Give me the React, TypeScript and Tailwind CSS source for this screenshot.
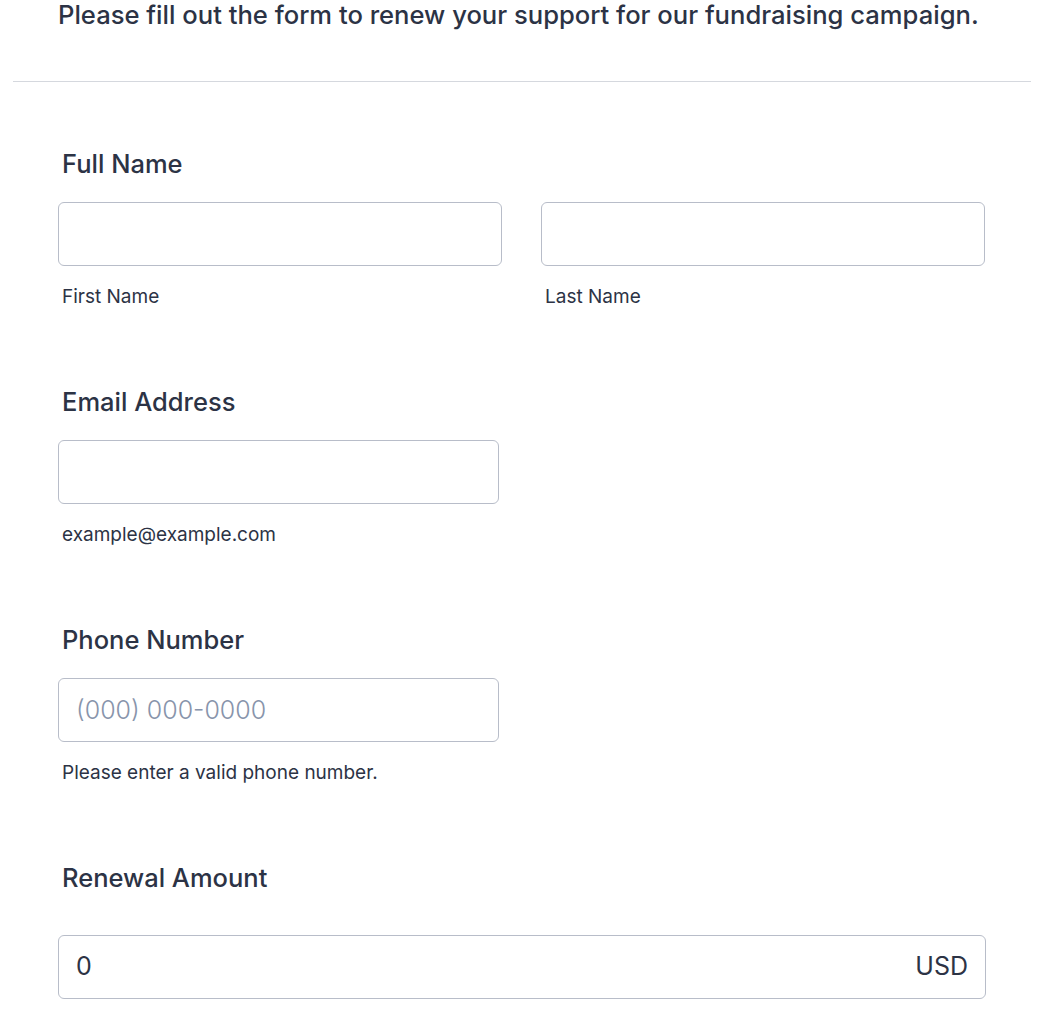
export default function App() {
  const label = "block text-[25.5px] leading-[32px] font-medium text-[#2c3345] pl-[4px]";
  const input =
    "block h-[64px] w-full rounded-[6px] border-[1.5px] border-[#b8bdc9] bg-white px-[17px] text-[25px] text-[#2c3345] outline-none placeholder:text-[#8894ab] placeholder:font-light";
  const sub = "block text-[19px] leading-[24px] text-[#2c3345] pl-[4px] mt-[19px]";

  return (
    <div className="min-h-screen bg-white font-['Inter','Noto_Sans',sans-serif] text-[#2c3345]">
      <div className="px-[13px]">
        <div className="pl-[45px] h-[82px]">
          <p className="text-[25.6px] leading-[32px] font-medium -mt-[1px]">
            Please fill out the form to renew your support for our fundraising campaign.
          </p>
        </div>
        <div className="border-t-[1.5px] border-[#d5d8de]" />
      </div>

      <div className="px-[58px] pt-[66px]">
        {/* Full Name */}
        <div>
          <label className={label}>Full Name</label>
          <div className="mt-[22px] grid grid-cols-2 gap-x-[39px] w-[927px]">
            <div>
              <input className={input} />
              <span className={sub}>First Name</span>
            </div>
            <div>
              <input className={input} />
              <span className={sub}>Last Name</span>
            </div>
          </div>
        </div>

        {/* Email */}
        <div className="mt-[77px]">
          <label className={label}>Email Address</label>
          <div className="mt-[22px] w-[441px]">
            <input className={input} type="email" />
            <span className={sub}>example@example.com</span>
          </div>
        </div>

        {/* Phone */}
        <div className="mt-[77px]">
          <label className={label}>Phone Number</label>
          <div className="mt-[22px] w-[441px]">
            <input className={input} placeholder="(000) 000-0000" />
            <span className={sub}>Please enter a valid phone number.</span>
          </div>
        </div>

        {/* Renewal Amount */}
        <div className="mt-[77px]">
          <label className={label}>Renewal Amount</label>
          <div className="mt-[41px] w-[928px] flex items-center h-[64px] rounded-[6px] border-[1.5px] border-[#b8bdc9] px-[17px]">
            <input className="flex-1 min-w-0 bg-transparent text-[25px] text-[#2c3345] outline-none" defaultValue="0" />
            <span className="text-[25px] text-[#2c3345]">USD</span>
          </div>
        </div>
      </div>
    </div>
  );
}
